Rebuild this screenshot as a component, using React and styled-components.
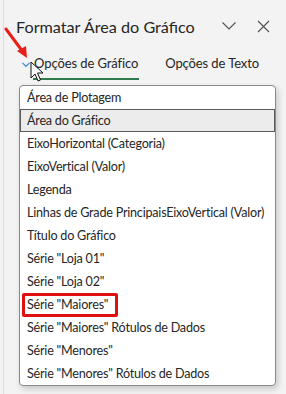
import styled, { createGlobalStyle } from "styled-components";

const GlobalStyle = createGlobalStyle`
  html, body {
    margin: 0;
    padding: 0;
    background: #f3f3f3;
    font-family: Lato, "Liberation Sans", sans-serif;
    color: #1f1f1f;
  }
`;

const Pane = styled.div`
  position: relative;
  width: 282px;
  height: 394px;
  margin-left: 3px;
  border-left: 1px solid #dcdcdc;
  box-sizing: border-box;
  overflow: hidden;
`;

const Header = styled.div`
  display: flex;
  align-items: center;
  height: 52px;
  padding: 0 0 0 12px;
`;

const Title = styled.h1`
  flex: 1;
  margin: 0;
  font-size: 16.2px;
  font-weight: 400;
  white-space: nowrap;
  color: #262626;
`;

const IconButton = styled.button`
  display: flex;
  align-items: center;
  justify-content: center;
  width: 20px;
  height: 20px;
  padding: 0;
  margin-right: ${(p) => p.$gap}px;
  border: none;
  background: none;
  color: #555;
`;

const Tabs = styled.div`
  display: flex;
  align-items: flex-end;
  height: 28px;
  padding-left: 18px;
`;

const Expander = styled.span`
  display: flex;
  align-items: center;
  width: 15px;
  height: 30px;
  color: #3b82d6;
`;

const Tab = styled.div`
  position: relative;
  margin-right: 25px;
  padding: 0 1px 9px;
  font-size: 13px;
  letter-spacing: -0.1px;
  white-space: nowrap;
  color: #262626;
  &::after {
    content: "";
    position: absolute;
    left: 0;
    right: 0;
    bottom: 0;
    height: 2px;
    background: ${(p) => (p.$active ? "#2f7d4f" : "transparent")};
  }
`;

const List = styled.ul`
  list-style: none;
  margin: 5px 0 0 15px;
  padding: 0;
  width: 257px;
  background: #fff;
  border: 1px solid #8a8a8a;
  border-radius: 4px;
  box-shadow: 2px 3px 6px rgba(0, 0, 0, 0.18);
  box-sizing: border-box;
`;

const Item = styled.li`
  position: relative;
  height: 23px;
  line-height: 21px;
  padding-left: 6px;
  font-size: 12.6px;
  letter-spacing: -0.22px;
  white-space: nowrap;
  color: #262626;
  box-sizing: border-box;
  background: ${(p) => (p.$hover ? "#ececec" : "transparent")};
  border: 1px solid ${(p) => (p.$hover ? "#5a5a5a" : "transparent")};
`;

const Mark = styled.span`
  position: absolute;
  left: 1px;
  top: -1px;
  width: 96px;
  height: 24px;
  border: 3px solid #e01010;
  border-radius: 2px;
  box-sizing: border-box;
`;

const Overlay = styled.svg`
  position: absolute;
  left: ${(p) => p.$x}px;
  top: ${(p) => p.$y}px;
  pointer-events: none;
`;

const items = [
  "Área de Plotagem",
  "Área do Gráfico",
  "EixoHorizontal (Categoria)",
  "EixoVertical (Valor)",
  "Legenda",
  "Linhas de Grade PrincipaisEixoVertical (Valor)",
  "Título do Gráfico",
  'Série "Loja 01"',
  'Série "Loja 02"',
  'Série "Maiores"',
  'Série "Maiores" Rótulos de Dados',
  'Série "Menores"',
  'Série "Menores" Rótulos de Dados',
];

export default function App() {
  return (
    <>
      <GlobalStyle />
      <Pane>
        <Header>
          <Title>Formatar Área do Gráfico</Title>
          <IconButton $gap={14} aria-label="opções">
            <svg width="16" height="10" viewBox="0 0 16 10" fill="none" stroke="currentColor" strokeWidth="1.2">
              <path d="M1.5 1.5 L8 8 L14.5 1.5" />
            </svg>
          </IconButton>
          <IconButton $gap={12} aria-label="fechar">
            <svg width="13" height="13" viewBox="0 0 13 13" fill="none" stroke="currentColor" strokeWidth="1.2">
              <path d="M1 1 L12 12 M12 1 L1 12" />
            </svg>
          </IconButton>
        </Header>
        <Tabs>
          <Expander>
            <svg width="8" height="6" viewBox="0 0 8 6" fill="none" stroke="currentColor" strokeWidth="1.2">
              <path d="M0.5 0.8 L4 4.5 L7.5 0.8" />
            </svg>
          </Expander>
          <Tab $active>Opções de Gráfico</Tab>
          <Tab>Opções de Texto</Tab>
        </Tabs>
        <List>
          {items.map((label, i) => (
            <Item key={label} $hover={i === 1}>
              {label}
              {i === 9 && <Mark />}
            </Item>
          ))}
        </List>
        <Overlay $x={0} $y={27} width="30" height="34" viewBox="0 0 30 34">
          <path d="M2 2 L19 25" stroke="#e8201a" strokeWidth="3" strokeLinecap="round" />
          <path d="M13 24 L23 31 L22 19 Z" fill="#e8201a" />
        </Overlay>
        <Overlay $x={26} $y={61} width="14" height="22" viewBox="0 0 14 22">
          <path d="M1 1 L1 17 L5 13 L8 20 L10.5 19 L7.5 12 L13 12 Z" fill="#fff" stroke="#111" strokeWidth="1" strokeLinejoin="round" />
        </Overlay>
      </Pane>
    </>
  );
}
